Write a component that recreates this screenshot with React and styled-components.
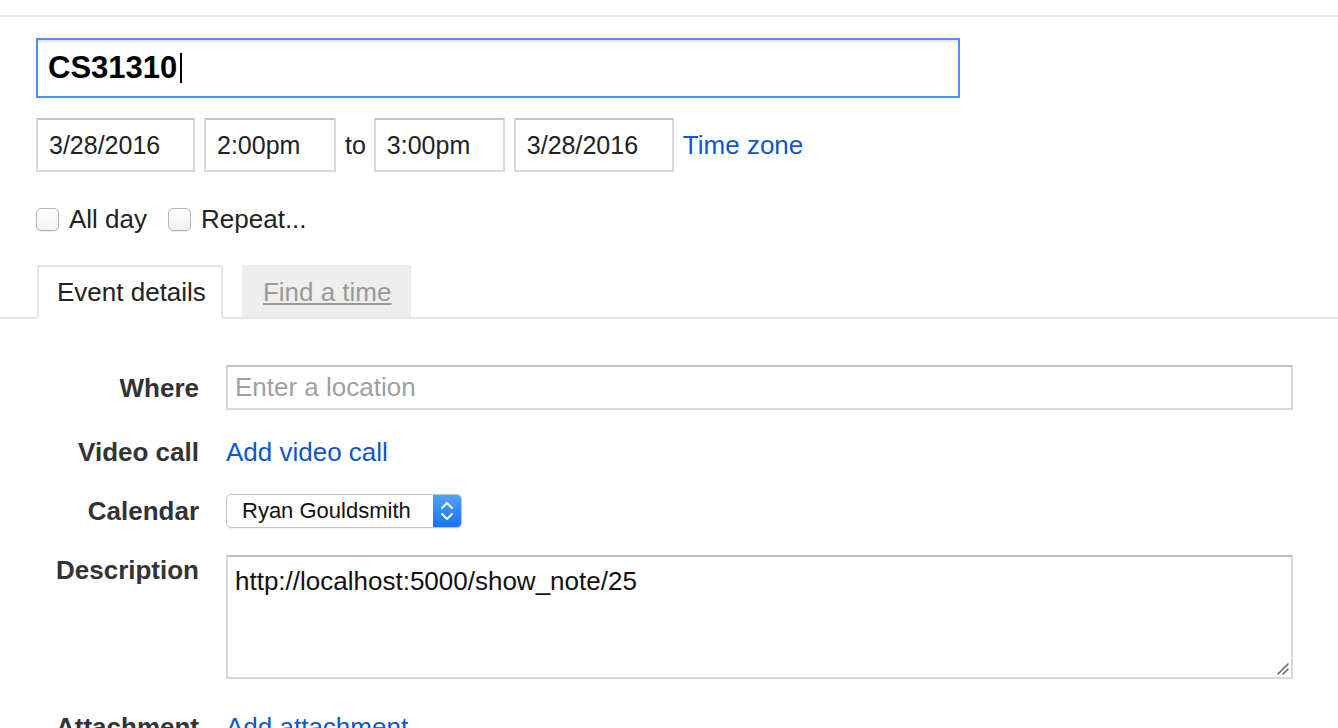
import React from 'react';
import styled, { createGlobalStyle } from 'styled-components';

const GlobalStyle = createGlobalStyle`
  html, body {
    margin: 0;
    padding: 0;
    background: #fff;
    font-family: "Liberation Sans", Arial, sans-serif;
    color: #222;
  }
`;

export default function App() {
  return (
    <>
      <GlobalStyle />
      <Page>
        <TopRule />
        <Body>
          <TitleBox>
            CS31310<Caret />
          </TitleBox>

          <DateRow>
            <TextBox width={159}>3/28/2016</TextBox>
            <TextBox width={132}>2:00pm</TextBox>
            <To>to</To>
            <TextBox width={131}>3:00pm</TextBox>
            <TextBox width={160}>3/28/2016</TextBox>
            <Link>Time zone</Link>
          </DateRow>

          <CheckRow>
            <CheckItem>
              <Check />
              All day
            </CheckItem>
            <CheckItem>
              <Check />
              Repeat...
            </CheckItem>
          </CheckRow>
        </Body>

        <Tabs>
          <Tab active>Event details</Tab>
          <Tab>
            <TabLink>Find a time</TabLink>
          </Tab>
        </Tabs>

        <Details>
          <Row align="center">
            <Label>Where</Label>
            <Field height={45}>
              <Placeholder>Enter a location</Placeholder>
            </Field>
          </Row>
          <Row align="center">
            <Label>Video call</Label>
            <Link>Add video call</Link>
          </Row>
          <Row align="center">
            <Label>Calendar</Label>
            <Select>
              <SelectText>Ryan Gouldsmith</SelectText>
              <Stepper>
                <svg width="14" height="22" viewBox="0 0 14 22" fill="none" stroke="#fff" strokeWidth="2" strokeLinecap="round" strokeLinejoin="round">
                  <path d="M2 8 L7 3 L12 8" />
                  <path d="M2 14 L7 19 L12 14" />
                </svg>
              </Stepper>
            </Select>
          </Row>
          <Row align="start">
            <Label>Description</Label>
            <Field height={124}>
              <AreaText>http://localhost:5000/show_note/25</AreaText>
              <Grip>
                <svg width="12" height="12" viewBox="0 0 12 12" stroke="#666" strokeWidth="1.6" strokeLinecap="round">
                  <path d="M1 11 L11 1" />
                  <path d="M6 11 L11 6" />
                </svg>
              </Grip>
            </Field>
          </Row>
          <Row align="center" extra={6}>
            <Label>Attachment</Label>
            <Link>Add attachment</Link>
          </Row>
        </Details>
      </Page>
    </>
  );
}

const Page = styled.div`
  width: 1338px;
  height: 728px;
  overflow: hidden;
  padding-top: 15px;
  box-sizing: border-box;
`;

const TopRule = styled.div`
  height: 2px;
  background: #e8e8e8;
`;

const Body = styled.div`
  padding: 21px 0 0 36px;
`;

const TitleBox = styled.div`
  width: 924px;
  height: 60px;
  box-sizing: border-box;
  border: 2px solid #4d90fe;
  box-shadow: inset 0 2px 3px rgba(0, 0, 0, 0.12);
  padding: 0 10px;
  display: flex;
  align-items: center;
  font-size: 31px;
  font-weight: bold;
  color: #000;
`;

const Caret = styled.span`
  display: inline-block;
  width: 2px;
  height: 30px;
  margin-left: 3px;
  background: #000;
`;

const DateRow = styled.div`
  display: flex;
  align-items: center;
  gap: 9px;
  margin-top: 20px;
  font-size: 25px;
`;

const TextBox = styled.div`
  width: ${(p) => p.width}px;
  height: 54px;
  box-sizing: border-box;
  border: 2px solid #dadada;
  border-top-color: #c2c2c2;
  padding: 0 11px;
  display: flex;
  align-items: center;
  color: #222;
`;

const To = styled.span`
  margin-right: -1px;
  color: #222;
`;

const Link = styled.a`
  justify-self: start;
  color: #1155cc;
  font-size: 26px;
  line-height: 30px;
  cursor: pointer;
`;

const CheckRow = styled.div`
  display: flex;
  align-items: center;
  gap: 21px;
  margin-top: 32px;
  font-size: 26px;
  color: #222;
`;

const CheckItem = styled.label`
  display: flex;
  align-items: center;
  gap: 10px;
`;

const Check = styled.span`
  width: 23px;
  height: 23px;
  box-sizing: border-box;
  border: 1px solid #b5b5b5;
  border-radius: 5px;
  background: linear-gradient(#fff, #f2f2f2);
  box-shadow: 0 1px 1px rgba(0, 0, 0, 0.08);
`;

const Tabs = styled.div`
  display: flex;
  align-items: flex-end;
  gap: 19px;
  margin-top: 28px;
  padding-left: 37px;
  height: 54px;
  border-bottom: 2px solid #e5e5e5;
`;

const Tab = styled.div`
  height: ${(p) => (p.active ? 54 : 52)}px;
  margin-bottom: ${(p) => (p.active ? -2 : 0)}px;
  box-sizing: border-box;
  padding: ${(p) => (p.active ? '0 15px 0 18px' : '0 18px 0 19px')};
  display: flex;
  align-items: center;
  font-size: 26px;
  color: #222;
  background: ${(p) => (p.active ? '#fff' : '#eeeeee')};
  border: 2px solid ${(p) => (p.active ? '#e5e5e5' : '#eeeeee')};
  border-bottom: ${(p) => (p.active ? '2px solid #fff' : 'none')};
`;

const TabLink = styled.span`
  color: #999;
  text-decoration: underline;
`;

const Details = styled.div`
  display: flex;
  flex-direction: column;
  gap: 27px;
  padding-top: 46px;
`;

const Row = styled.div`
  display: grid;
  grid-template-columns: 199px 1067px;
  column-gap: 27px;
  align-items: ${(p) => p.align};
  margin-top: ${(p) => p.extra || 0}px;
`;

const Label = styled.div`
  text-align: right;
  font-size: 26px;
  line-height: 30px;
  font-weight: bold;
  color: #333;
`;

const Field = styled.div`
  position: relative;
  height: ${(p) => p.height}px;
  box-sizing: border-box;
  border: 2px solid #d9d9d9;
  border-top-color: #c0c0c0;
  padding: 0 7px;
  display: flex;
  align-items: ${(p) => (p.height > 60 ? 'flex-start' : 'center')};
`;

const Placeholder = styled.span`
  font-size: 26px;
  color: #a0a0a0;
`;

const AreaText = styled.span`
  font-size: 26px;
  color: #111;
  margin-top: 9px;
`;

const Grip = styled.span`
  position: absolute;
  right: 2px;
  bottom: 2px;
  display: flex;
`;

const Select = styled.div`
  width: 236px;
  height: 34px;
  box-sizing: border-box;
  border: 1px solid #c6c6c6;
  border-radius: 5px;
  display: flex;
  align-items: stretch;
  overflow: hidden;
  background: #fff;
  box-shadow: 0 1px 1px rgba(0, 0, 0, 0.06);
`;

const SelectText = styled.span`
  flex: 1;
  display: flex;
  align-items: center;
  padding-left: 15px;
  font-family: "Liberation Sans", Arial, sans-serif;
  font-size: 22px;
  color: #111;
`;

const Stepper = styled.span`
  width: 28px;
  display: flex;
  align-items: center;
  justify-content: center;
  background: linear-gradient(#4fa1fc, #1a72f5);
`;
